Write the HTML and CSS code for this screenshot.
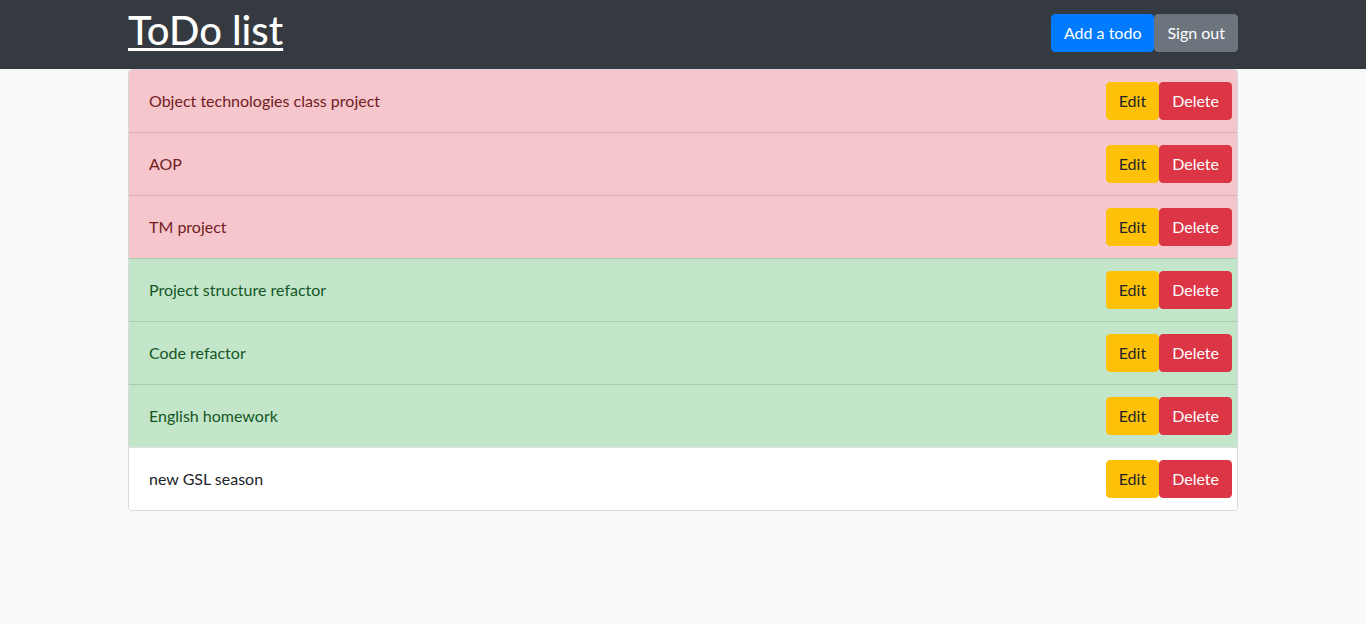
FILE: index.html
```html
<!DOCTYPE html>
<html lang="en">
<head>
<meta charset="utf-8">
<title>ToDo list</title>
<link rel="stylesheet" href="styles.css">
</head>
<body>
<nav class="navbar">
  <div class="container nav-inner">
    <h1 class="brand"><a href="#">ToDo list</a></h1>
    <div class="nav-actions">
      <button class="btn btn-primary">Add a todo</button>
      <button class="btn btn-secondary">Sign out</button>
    </div>
  </div>
</nav>
<main class="container">
  <ul class="list">
    <li class="item item-danger"><span>Object technologies class project</span><div class="actions"><button class="btn btn-warning">Edit</button><button class="btn btn-danger">Delete</button></div></li>
    <li class="item item-danger"><span>AOP</span><div class="actions"><button class="btn btn-warning">Edit</button><button class="btn btn-danger">Delete</button></div></li>
    <li class="item item-danger"><span>TM project</span><div class="actions"><button class="btn btn-warning">Edit</button><button class="btn btn-danger">Delete</button></div></li>
    <li class="item item-success"><span>Project structure refactor</span><div class="actions"><button class="btn btn-warning">Edit</button><button class="btn btn-danger">Delete</button></div></li>
    <li class="item item-success"><span>Code refactor</span><div class="actions"><button class="btn btn-warning">Edit</button><button class="btn btn-danger">Delete</button></div></li>
    <li class="item item-success"><span>English homework</span><div class="actions"><button class="btn btn-warning">Edit</button><button class="btn btn-danger">Delete</button></div></li>
    <li class="item"><span>new GSL season</span><div class="actions"><button class="btn btn-warning">Edit</button><button class="btn btn-danger">Delete</button></div></li>
  </ul>
</main>
</body>
</html>
```
FILE: styles.css
```css
* { box-sizing: border-box; }
html, body { margin: 0; }
body {
  background: #f8f9fa;
  color: #212529;
  font-family: Lato, "Open Sans", Arial, sans-serif;
  font-size: 16px;
  line-height: 1.5;
}
.container {
  width: 1140px;
  margin: 0 auto;
  padding: 0 15px;
}
.navbar {
  background: #343a40;
  height: 69px;
}
.nav-inner {
  display: flex;
  align-items: flex-start;
  justify-content: space-between;
  height: 100%;
  padding-top: 6px;
}
.brand {
  margin: 0;
  font-size: 40px;
  font-weight: 500;
  line-height: 48px;
}
.brand a {
  color: #fff;
  text-decoration: underline;
  text-decoration-thickness: 3px;
  text-underline-offset: 3px;
}
.nav-actions {
  display: flex;
  margin-top: 8px;
}
.btn {
  font-family: inherit;
  font-size: 16px;
  line-height: 24px;
  padding: 6px 12px;
  border: 1px solid transparent;
  border-radius: 4px;
  cursor: pointer;
}
.btn-primary { background: #007bff; border-color: #007bff; color: #fff; }
.btn-secondary { background: #6c757d; border-color: #6c757d; color: #fff; }
.btn-warning { background: #ffc107; border-color: #ffc107; color: #212529; }
.btn-danger { background: #dc3545; border-color: #dc3545; color: #fff; }
.list {
  list-style: none;
  margin: 0;
  padding: 0;
  border: 1px solid rgba(0,0,0,.125);
  border-radius: 4px;
  overflow: hidden;
}
.item {
  display: flex;
  align-items: center;
  justify-content: space-between;
  background: #fff;
  padding: 12px 5px 12px 20px;
  border-top: 1px solid rgba(0,0,0,.125);
}
.item:first-child { border-top: 0; }
.item-danger { background: #f5c6cb; color: #721c24; }
.item-success { background: #c3e6cb; color: #155724; }
.actions { display: flex; }
```
